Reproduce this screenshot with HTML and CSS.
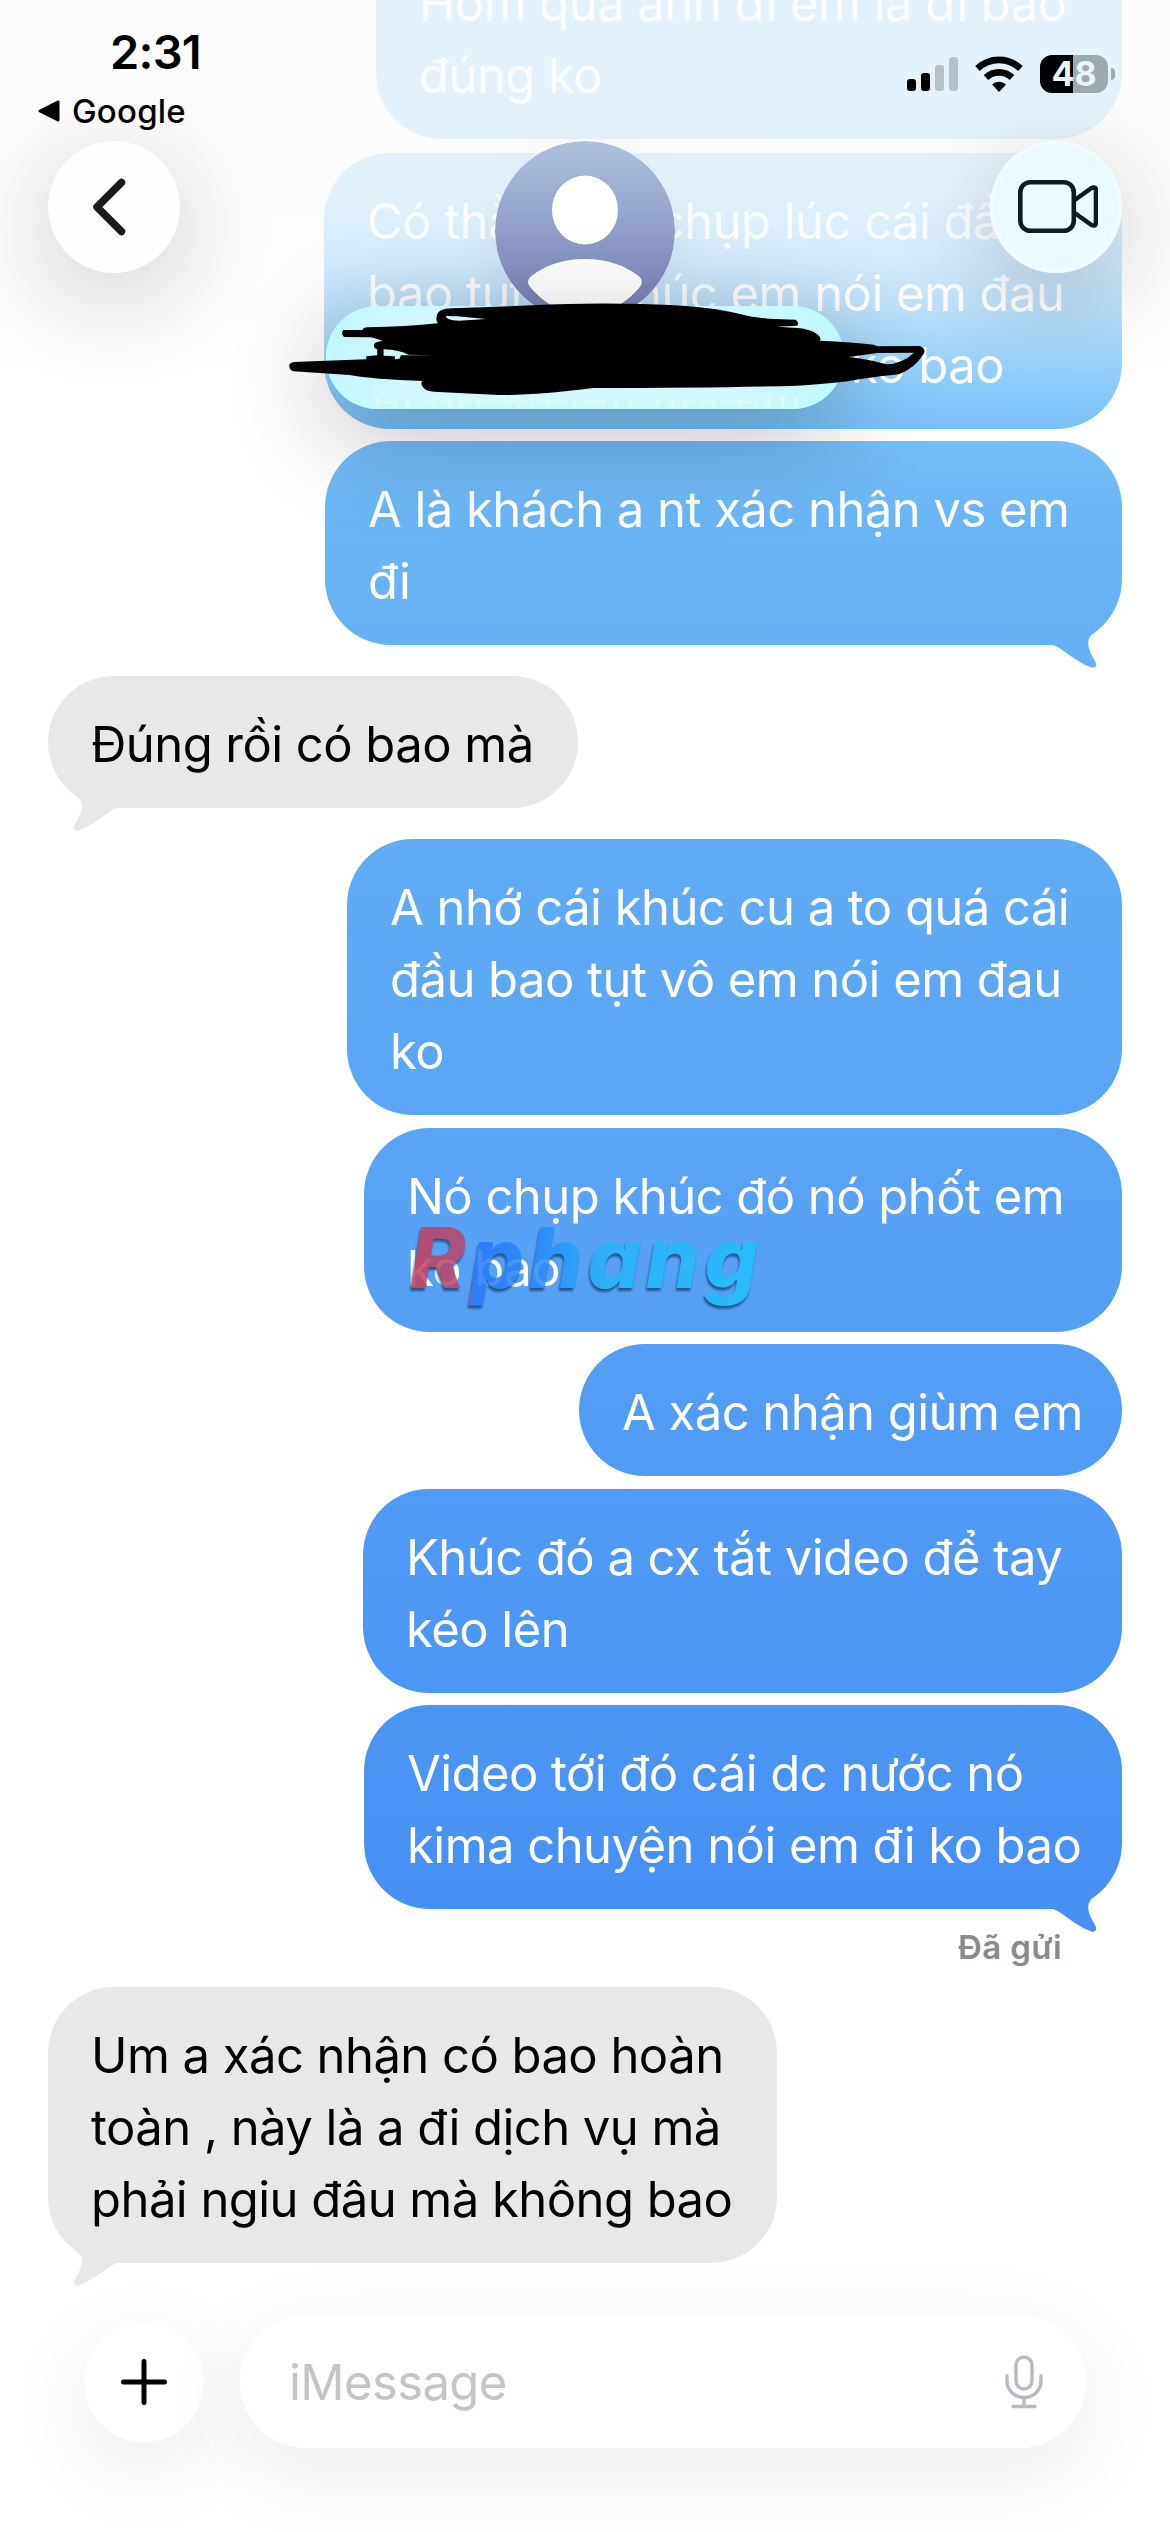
FILE: index.html
```html
<!DOCTYPE html>
<html lang="vi">
<head>
<meta charset="utf-8">
<title>iMessage</title>
<link rel="stylesheet" href="styles.css">
</head>
<body>
<main class="thread">
  <p class="bubble sent first w-746">Hôm qua anh đi em là đi bao<br>đúng ko</p>
  <p class="bubble sent w-798">Có thằng nó chụp lúc cái đầu<br>bao tụt vô khúc em nói em đau<br><span class="tail-words">ko bao</span></p>
  <p class="bubble sent last w-797">A là khách a nt xác nhận vs em<br>đi</p>
  <p class="bubble received w-530">Đúng rồi có bao mà</p>
  <p class="bubble sent w-775">A nhớ cái khúc cu a to quá cái<br>đầu bao tụt vô em nói em đau<br>ko</p>
  <p class="bubble sent w-758">Nó chụp khúc đó nó phốt em<br>ko bao</p>
  <p class="bubble sent w-543">A xác nhận giùm em</p>
  <p class="bubble sent w-759">Khúc đó a cx tắt video để tay<br>kéo lên</p>
  <p class="bubble sent last w-758">Video tới đó cái dc nước nó<br>kima chuyện nói em đi ko bao</p>
  <p class="receipt">Đã gửi</p>
  <p class="bubble received w-729">Um a xác nhận có bao hoàn<br>toàn , này là a đi dịch vụ mà<br>phải ngiu đâu mà không bao</p>
</main>

<div class="watermark">Rphang</div>
<div class="fade"></div>

<header class="top">
  <div class="status">
    <div class="status-left">
      <div class="time">2:31</div>
      <div class="back-app"><svg width="22" height="22" viewBox="0 0 22 22"><path d="M20 2v18L2 11z" stroke="#000" stroke-width="3" stroke-linejoin="round"/></svg>Google</div>
    </div>
    <div class="status-right">
      <svg width="52" height="36" viewBox="0 0 52 36">
        <rect x="0" y="23" width="9" height="12" rx="3"/>
        <rect x="14" y="17" width="9" height="18" rx="3"/>
        <rect x="28" y="9" width="9" height="26" rx="3" fill="#b5c0c7"/>
        <rect x="42" y="1" width="9" height="34" rx="3" fill="#b5c0c7"/>
      </svg>
      <svg class="wifi" width="48" height="36" viewBox="0 0 48 36">
        <path d="M2.500 12.500a31 31 0 0 1 43 0M11 21.500a19 19 0 0 1 26 0" fill="none" stroke="#000" stroke-width="6.600"/>
        <path d="M24 36l-7-7.500a10 10 0 0 1 14 0z"/>
      </svg>
      <div class="battery"><span class="cell">48</span><span class="nub"></span></div>
    </div>
  </div>
  <nav class="bar">
    <button class="round" aria-label="Back">
      <svg width="40" height="66" viewBox="0 0 40 66"><path d="M29.500 8.500L5 33l24.500 24.500" fill="none" stroke="#1a1a1a" stroke-width="7.500" stroke-linecap="round" stroke-linejoin="round"/></svg>
    </button>
    <div class="contact">
      <svg class="avatar" width="180" height="180" viewBox="0 0 180 180">
        <defs><linearGradient id="av" x1="0" y1="0" x2="0" y2="1"><stop offset="0" stop-color="#adc1de"/><stop offset=".9" stop-color="#7a83b8"/></linearGradient></defs>
        <circle cx="90" cy="90" r="90" fill="url(#av)"/>
        <ellipse cx="90" cy="69" rx="33" ry="34.500" fill="#fff"/>
        <path d="M90 118c24 0 40 7 53 16.500 5 4 5 8 1 12.500C130 163 112 174 90 174S50 163 36 147c-4-4.500-4-8.500 1-12.500C50 125 66 118 90 118z" fill="#fff"/>
      </svg>
      <div class="name"><span>ei uo ab iəu uoi em</span></div>
      <svg class="scribble" width="660" height="320" viewBox="0 0 1568 960" preserveAspectRatio="none">
        <path d="M372 590Q374 565 410 565L600 556Q720 548 860 552Q1000 556 1080 578Q1130 594 1160 596L1225 599Q1234 606 1229 617L1180 620L1230 624Q1275 630 1284 655L1283 662Q1360 666 1410 674L1420 679L1520 678Q1536 686 1529 702Q1508 745 1470 763Q1430 768 1375 778Q1330 790 1230 797Q1040 804 745 804Q610 826 520 825L365 815Q335 812 336 786L340 783Q220 778 165 765L32 754Q22 750 22 738Q22 729 32 726L205 718L205 709L231 706L231 688Q221 684 224 672Q228 664 245 663Q228 656 216 652L152 651Q144 641 150 630L196 630Q198 622 208 622Q300 620 375 610Q370 602 372 590zM394 588Q394 601 425 602L490 597L420 589zM246 688L246 707L273 709L273 718L284 716L287 706L360 706L305 704Q285 690 246 688zM1350 711Q1400 718 1440 733Q1478 732 1506 698L1420 699z" fill-rule="evenodd"/>
      </svg>
    </div>
    <button class="round tinted" aria-label="FaceTime">
      <svg width="80" height="56" viewBox="0 0 80 56"><g fill="none" stroke="#0d1c24" stroke-width="4.600" stroke-linejoin="round"><rect x="2.300" y="3.300" width="53.500" height="48.500" rx="10"/><path d="M56 21.500L73.500 9q4.500-2 4.500 3V43q0 5-4.500 3L56 33.500"/></g></svg>
    </button>
  </nav>
</header>

<footer class="composer">
  <button class="plus" aria-label="Add"><svg width="46" height="46" viewBox="0 0 46 46"><path d="M23 2.500v41M2.500 23h41" stroke="#000" stroke-width="5" stroke-linecap="round"/></svg></button>
  <div class="field"><span>iMessage</span>
    <svg width="38" height="54" viewBox="0 0 38 54"><g fill="none" stroke="#b7b9c2" stroke-width="3.400" stroke-linecap="round"><rect x="11" y="2" width="16" height="32" rx="8"/><path d="M2 21v5a17 16.500 0 0 0 34 0v-5M19 43v8M8 51.500h22"/></g></svg>
  </div>
</footer>
</body>
</html>
```
FILE: styles.css
```css
* { box-sizing: border-box; }

body {
  margin: 0;
  position: relative;
  width: 1170px;
  height: 2532px;
  overflow: hidden;
  background: #fff;
  color: #000;
  font-family: Inter, "Noto Sans", sans-serif;
}

p { margin: 0; }

button {
  border: 0;
  padding: 0;
  display: grid;
  place-items: center;
}

/* Conversation */
.thread {
  display: flex;
  flex-direction: column;
  gap: 12.5px;
  margin-top: -65.5px;
  padding: 0 48px;
}

.bubble {
  position: relative;
  flex: none;
  padding: 33px 0 27px 43px;
  border-radius: 66px;
  font-size: 49px;
  line-height: 72px;
  letter-spacing: -0.55px;
  white-space: nowrap;
}

.bubble.first { margin-bottom: 1.5px; }

.sent,
.sent.last::after {
  background: linear-gradient(#80c8fa 0, #7cc4f9 380px, #6ab5f6 520px, #66b1f5 645px, #549ff4 1330px, #4690f4 1910px) fixed;
}

.sent {
  align-self: flex-end;
  color: #fff;
}

.received {
  align-self: flex-start;
  margin: 18.5px 0;
  background: #e8e8ea;
}

.sent.last::after,
.received::after {
  content: "";
  position: absolute;
  right: 0;
  bottom: -24px;
  width: 80px;
  height: 74px;
  clip-path: path("M10 49.500C22 54 32 66 48 72C53 74 56 71 53 66C47 56 44 48 48 42C52 35 60 30 70 14L60 0L0 30L0 49.500Z");
}

.received::after {
  right: auto;
  left: 0;
  background: #e8e8ea;
  transform: scaleX(-1);
}

.w-530 { width: 530px; }
.w-543 { width: 543px; }
.w-729 { width: 729px; }
.w-746 { width: 746px; }
.w-758 { width: 758px; }
.w-759 { width: 759px; }
.w-775 { width: 775px; }
.w-797 { width: 797px; }
.w-798 { width: 798px; }

.tail-words { margin-left: 484px; }

.receipt {
  align-self: flex-end;
  height: 34.5px;
  margin-right: 60px;
  color: #8a8a8e;
  font-size: 33px;
  font-weight: 600;
  line-height: 51px;
  letter-spacing: .4px;
}

.watermark {
  position: absolute;
  left: 410px;
  top: 1208px;
  font-size: 84px;
  font-style: italic;
  font-weight: 800;
  line-height: 100px;
  letter-spacing: 5px;
  background: linear-gradient(90deg, #c83c58 0, #b8486e 16%, #2878fa 18%, #2888fa 36%, #26b4fa 56%, #22c0fc);
  background-clip: text;
  color: transparent;
  filter: drop-shadow(-1px 3px 1px #1c4a80);
  opacity: .85;
}

/* Veil that dissolves messages under the header */
.fade {
  position: absolute;
  inset: 0 0 auto;
  height: 440px;
  background: linear-gradient(rgba(252, 252, 252, .81) 0 190px, rgba(252, 252, 252, .68) 260px, rgba(252, 252, 252, .42) 325px, rgba(252, 252, 252, .12) 385px, rgba(255, 255, 255, 0));
}

/* Header */
.top {
  position: absolute;
  inset: 0 0 auto;
}

.status {
  display: flex;
  justify-content: space-between;
  height: 141px;
  padding: 0 55px 0 38px;
}

.time {
  padding: 23px 0 0 72px;
  font-size: 47px;
  font-weight: 600;
  line-height: 57px;
  letter-spacing: -.8px;
}

.back-app {
  display: flex;
  align-items: center;
  gap: 12px;
  margin-top: 11px;
  font-size: 33px;
  font-weight: 500;
  line-height: 40px;
  letter-spacing: .2px;
}

.status-right {
  display: flex;
  align-items: center;
  height: 38px;
  margin-top: 55px;
}

.wifi { margin: 0 17px 0 16px; }

.battery {
  display: flex;
  align-items: center;
  gap: 3px;
}

.cell {
  width: 68px;
  height: 38px;
  border-radius: 12px;
  background: linear-gradient(90deg, #000 33px, #9fa9b0 33px);
  color: #eaf5fb;
  font-size: 34px;
  font-weight: 700;
  line-height: 38px;
  text-align: center;
}

.nub {
  width: 4px;
  height: 12px;
  border-radius: 0 4px 4px 0;
  background: #9fa9b0;
}

.bar {
  display: flex;
  justify-content: space-between;
  align-items: flex-start;
  padding: 0 48px;
}

.round {
  width: 132px;
  height: 132px;
  border-radius: 50%;
  background: #fefefe;
  box-shadow: 0 24px 100px rgba(0, 0, 0, .2);
}

.round svg { margin-right: 4px; }

.round.tinted {
  background: #eafafe;
  box-shadow: 0 24px 100px rgba(0, 0, 0, .2), inset 0 0 4px 2px #f6feff;
}

.round.tinted svg { margin: 0 -3px 0 0; }

.contact {
  position: relative;
  display: flex;
  flex-direction: column;
  align-items: center;
}

.avatar {
  border-radius: 50%;
  box-shadow: 0 12px 60px rgba(0, 0, 0, .06);
}

.name {
  position: relative;
  width: 518px;
  height: 103px;
  margin-top: -15px;
  border-radius: 52px;
  background: linear-gradient(90deg, #c2f6fe, #d4f7fd 20%, #d2f8fe 80%, #bdf6ff);
  box-shadow: 0 24px 100px rgba(0, 0, 0, .28), inset 0 0 6px 3px #bdfbff;
}

.name span {
  position: absolute;
  left: 48px;
  bottom: 1px;
  width: 430px;
  height: 11px;
  overflow: hidden;
  color: #dafaff;
  font-size: 44px;
  line-height: 4px;
  letter-spacing: 2px;
  white-space: nowrap;
  transform: scaleY(-1);
}

.scribble {
  position: absolute;
  left: -46px;
  top: -21px;
}

/* Composer */
.composer {
  position: absolute;
  inset: 2315px 84px auto;
  display: flex;
  align-items: center;
  gap: 36px;
}

.plus {
  width: 120px;
  height: 120px;
  border-radius: 50%;
  background: #fff;
  box-shadow: 0 24px 90px rgba(0, 0, 0, .08);
}

.field {
  display: flex;
  flex: 1;
  align-items: center;
  justify-content: space-between;
  height: 133px;
  padding: 0 43px 0 49px;
  border-radius: 66px;
  background: #fff;
  box-shadow: 0 24px 90px rgba(0, 0, 0, .08);
  color: #c4c4c6;
  font-size: 49px;
  letter-spacing: -.6px;
}

.field span { padding-top: 2px; }
```
